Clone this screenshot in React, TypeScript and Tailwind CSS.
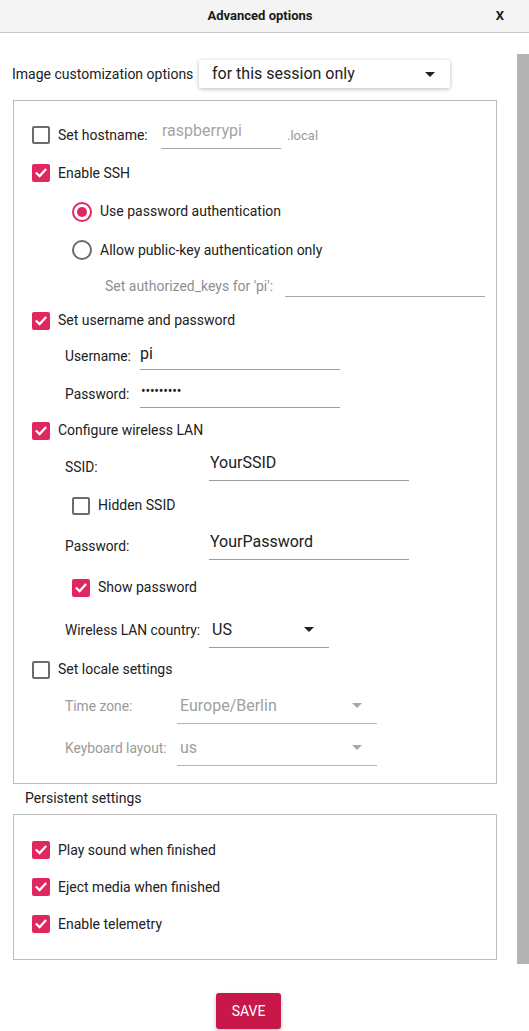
import React from "react";

function Check({ checked }: { checked: boolean }) {
  if (checked) {
    return (
      <span className="w-[18px] h-[18px] rounded-[2px] bg-[#e0275f] flex items-center justify-center shrink-0">
        <svg width="14" height="14" viewBox="0 0 14 14">
          <path d="M2.6 7.3 L5.6 10.1 L11.4 3.9" stroke="white" strokeWidth="2.2" fill="none" strokeLinecap="square" />
        </svg>
      </span>
    );
  }
  return <span className="w-[18px] h-[18px] rounded-[2px] border-2 border-[#6b6b6b] shrink-0" />;
}

function Radio({ checked }: { checked: boolean }) {
  return checked ? (
    <span className="w-[20px] h-[20px] rounded-full border-2 border-[#e0275f] flex items-center justify-center shrink-0">
      <span className="w-[10px] h-[10px] rounded-full bg-[#e0275f]" />
    </span>
  ) : (
    <span className="w-[20px] h-[20px] rounded-full border-2 border-[#6b6b6b] shrink-0" />
  );
}

function Arrow({ color }: { color: string }) {
  return (
    <svg width="10" height="5" viewBox="0 0 10 5">
      <path d="M0 0 L10 0 L5 5 Z" fill={color} />
    </svg>
  );
}

export default function App() {
  return (
    <div className="w-[529px] h-[1031px] overflow-hidden bg-white font-[family-name:Roboto,Arial,sans-serif] text-[#212121]">
      {/* Header */}
      <div className="h-[33px] border-b border-[#c4c4c4] bg-[#f4f4f4] flex items-center">
        <div className="w-[51px]" />
        <div className="flex-1 text-center text-[13px] font-bold text-[#1a1a1a]">Advanced options</div>
        <div className="w-[60px] text-center text-[13px] font-bold text-[#1a1a1a] pl-[2px]">X</div>
      </div>

      <div className="flex">
        {/* Main column */}
        <div className="w-[517px] flex flex-col">
          <div className="mt-[27px] h-[28px] flex items-center">
            <div className="pl-[12px] w-[199px] text-[14px]">Image customization options</div>
            <div className="w-[251px] h-[28px] bg-white rounded-[2px] shadow-[0_1px_4px_rgba(0,0,0,0.28)] flex items-center justify-between pl-[13px] pr-[15px]">
              <span className="text-[16px]">for this session only</span>
              <Arrow color="#212121" />
            </div>
          </div>

          {/* Box 1 */}
          <div className="mt-[12px] ml-[13px] w-[484px] border border-[#bdbdbd] pt-[15px] pb-[12px] flex flex-col">
            {/* hostname */}
            <div className="h-[38px] flex items-center pl-[18px]">
              <Check checked={false} />
              <span className="ml-[8px] w-[103px] text-[14px]">Set hostname:</span>
              <div className="w-[120px] h-[28px] border-b border-[#a8a8a8] text-[16px] leading-[20px] text-[#a4a4a4] pl-[1px]">raspberrypi</div>
              <span className="ml-[6px] text-[13px] text-[#9a9a9a] mt-[2px]">.local</span>
            </div>
            {/* SSH */}
            <div className="h-[38px] flex items-center pl-[18px]">
              <Check checked={true} />
              <span className="ml-[8px] text-[14px]">Enable SSH</span>
            </div>
            <div className="h-[39px] flex items-center pl-[58px]">
              <Radio checked={true} />
              <span className="ml-[8px] text-[14px]">Use password authentication</span>
            </div>
            <div className="h-[38px] flex items-center pl-[58px]">
              <Radio checked={false} />
              <span className="ml-[8px] text-[14px]">Allow public-key authentication only</span>
            </div>
            <div className="h-[35px] flex items-center pl-[91px]">
              <span className="w-[180px] text-[14px] text-[#8f8f8f]">Set authorized_keys for 'pi':</span>
              <div className="w-[200px] h-[20px] border-b border-[#a8a8a8]" />
            </div>
            {/* user & pass */}
            <div className="h-[33px] flex items-center pl-[18px]">
              <Check checked={true} />
              <span className="ml-[8px] text-[14px]">Set username and password</span>
            </div>
            <div className="h-[39px] flex items-center pl-[51px]">
              <span className="w-[75px] text-[13.8px]">Username:</span>
              <div className="w-[200px] h-[26px] border-b border-[#9e9e9e] text-[16px] leading-[20px]">pi</div>
            </div>
            <div className="h-[37px] flex items-center pl-[51px]">
              <span className="w-[75px] text-[13.8px]">Password:</span>
              <div className="w-[200px] h-[26px] border-b border-[#9e9e9e] text-[13.8px] leading-[18px] tracking-[-0.2px] pl-[1px]">•••••••••</div>
            </div>
            {/* wifi */}
            <div className="h-[35px] flex items-center pl-[18px]">
              <Check checked={true} />
              <span className="ml-[8px] text-[14px]">Configure wireless LAN</span>
            </div>
            <div className="h-[38px] flex items-center pl-[51px]">
              <span className="w-[144px] text-[13.8px]">SSID:</span>
              <div className="w-[200px] h-[28px] border-b border-[#9e9e9e] text-[16px] leading-[20px] pl-[1px]">YourSSID</div>
            </div>
            <div className="h-[39px] flex items-center pl-[58px]">
              <Check checked={false} />
              <span className="ml-[8px] text-[14px]">Hidden SSID</span>
            </div>
            <div className="h-[42px] flex items-center pl-[51px]">
              <span className="w-[144px] text-[13.8px]">Password:</span>
              <div className="w-[200px] h-[28px] border-b border-[#9e9e9e] text-[16px] leading-[20px] pl-[1px]">YourPassword</div>
            </div>
            <div className="h-[41px] flex items-center pl-[58px]">
              <Check checked={true} />
              <span className="ml-[8px] text-[14px]">Show password</span>
            </div>
            <div className="h-[44px] flex items-center pl-[51px]">
              <span className="w-[144px] text-[13.8px]">Wireless LAN country:</span>
              <div className="w-[120px] h-[36px] border-b border-[#9e9e9e] flex items-center justify-between pl-[3px] pr-[15px]">
                <span className="text-[16px]">US</span>
                <Arrow color="#212121" />
              </div>
            </div>
            {/* locale */}
            <div className="h-[35px] flex items-center pl-[18px]">
              <Check checked={false} />
              <span className="ml-[8px] text-[14px]">Set locale settings</span>
            </div>
            <div className="h-[38px] flex items-center pl-[51px]">
              <span className="w-[112px] text-[13.8px] text-[#9a9a9a]">Time zone:</span>
              <div className="w-[200px] h-[36px] border-b border-[#b5b5b5] flex items-center justify-between pl-[3px] pr-[15px]">
                <span className="text-[16px] text-[#a0a0a0]">Europe/Berlin</span>
                <Arrow color="#a8a8a8" />
              </div>
            </div>
            <div className="h-[46px] flex items-center pl-[51px]">
              <span className="w-[112px] text-[13.8px] text-[#9a9a9a]">Keyboard layout:</span>
              <div className="w-[200px] h-[36px] border-b border-[#b5b5b5] flex items-center justify-between pl-[3px] pr-[15px]">
                <span className="text-[16px] text-[#a0a0a0]">us</span>
                <Arrow color="#a8a8a8" />
              </div>
            </div>
          </div>

          <div className="h-[28px] flex items-center pl-[25px] text-[14px]">Persistent settings</div>

          {/* Box 2 */}
          <div className="mt-[2px] ml-[13px] w-[484px] border border-[#bdbdbd] pt-[16px] pb-[16px] flex flex-col">
            <div className="h-[38px] flex items-center pl-[18px]">
              <Check checked={true} />
              <span className="ml-[8px] text-[14px]">Play sound when finished</span>
            </div>
            <div className="h-[36px] flex items-center pl-[18px]">
              <Check checked={true} />
              <span className="ml-[8px] text-[14px]">Eject media when finished</span>
            </div>
            <div className="h-[38px] flex items-center pl-[18px]">
              <Check checked={true} />
              <span className="ml-[8px] text-[14px]">Enable telemetry</span>
            </div>
          </div>

          <div className="mt-[33px] pl-[216px]">
            <button className="w-[65px] h-[36px] rounded-[3px] bg-[#c8184a] text-white text-[14px] shadow-[0_2px_4px_rgba(0,0,0,0.25)] flex items-center justify-center">
              SAVE
            </button>
          </div>
        </div>

        {/* Scrollbar */}
        <div className="w-[12px] flex flex-col">
          <div className="mt-[21px] h-[910px] bg-[#b3b3b3]" />
        </div>
      </div>
    </div>
  );
}
